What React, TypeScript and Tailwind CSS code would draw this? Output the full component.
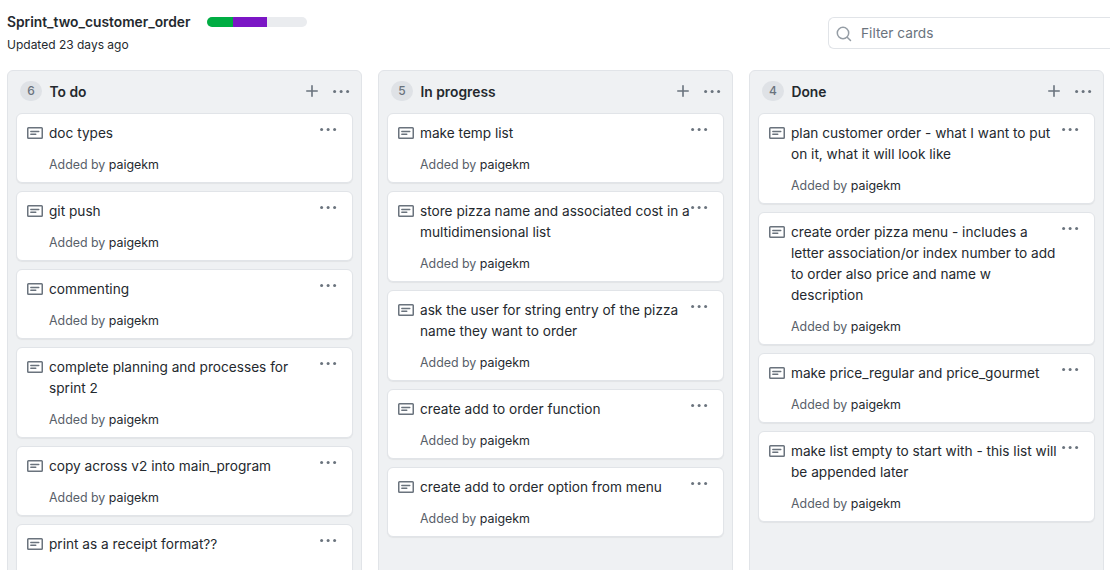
import React from "react";

type Column = { count: number; title: string; cards: string[] };

const columns: Column[] = [
  {
    count: 6,
    title: "To do",
    cards: [
      "doc types",
      "git push",
      "commenting",
      "complete planning and processes for\nsprint 2",
      "copy across v2 into main_program",
      "print as a receipt format??",
    ],
  },
  {
    count: 5,
    title: "In progress",
    cards: [
      "make temp list",
      "store pizza name and associated cost in a\nmultidimensional list",
      "ask the user for string entry of the pizza\nname they want to order",
      "create add to order function",
      "create add to order option from menu",
    ],
  },
  {
    count: 4,
    title: "Done",
    cards: [
      "plan customer order - what I want to put\non it, what it will look like",
      "create order pizza menu - includes a\nletter association/or index number to add\nto order also price and name w\ndescription",
      "make price_regular and price_gourmet",
      "make list empty to start with - this list will\nbe appended later",
    ],
  },
];

function Dots() {
  return (
    <svg width="17" height="3" viewBox="0 0 17 3" fill="#6a737d" className="shrink-0">
      <circle cx="1.6" cy="1.5" r="1.5" />
      <circle cx="8.1" cy="1.5" r="1.5" />
      <circle cx="14.6" cy="1.5" r="1.5" />
    </svg>
  );
}

function NoteIcon() {
  return (
    <svg width="16" height="16" viewBox="0 0 16 16" fill="none" stroke="#6a737d" className="mt-[3px] shrink-0">
      <rect x="0.75" y="2.65" width="14.5" height="10.7" rx="0.8" strokeWidth="1.5" />
      <path d="M3.8 6.5h8M3.8 9.3h5" strokeWidth="1.4" strokeLinecap="round" />
    </svg>
  );
}

function CardItem({ text }: { text: string }) {
  return (
    <article className="flex rounded-md border border-[#e1e4e8] bg-white pt-[8px] pr-[15px] pb-[7px] pl-[10px] shadow-[0_1px_1px_rgba(27,31,35,0.06)]">
      <NoteIcon />
      <div className="ml-[6px] w-0 min-w-0 flex-1 pt-px">
        <p className="text-[13.65px] leading-[21px] whitespace-pre text-[#24292e]">{text}</p>
        <p className="mt-[10px] text-[12.4px] leading-[21px] text-[#586069]">
          Added by <span className="text-[#24292e]">paigekm</span>
        </p>
      </div>
      <div className="mt-[6px] flex h-[3px] shrink-0">
        <Dots />
      </div>
    </article>
  );
}

export default function App() {
  return (
    <div className="flex h-[570px] w-[1110px] flex-col overflow-hidden bg-white font-['Inter',sans-serif] text-[#24292e]">
      <header className="flex h-[70px] shrink-0 justify-between pl-[7px]">
        <div className="pt-[11px]">
          <div className="flex items-center">
            <h1 className="w-[200px] pt-[2px] text-[13.8px] leading-[19px] font-semibold">Sprint_two_customer_order</h1>
            <div className="flex h-[10px] w-[100px] overflow-hidden rounded-full bg-[#eaecef]">
              <span className="w-[26px] bg-[#00ad43]" />
              <span className="w-[34px] bg-[#7b16c5]" />
            </div>
          </div>
          <p className="mt-[4px] text-[12px] leading-[18px]">Updated 23 days ago</p>
        </div>
        <div className="mt-[17px] flex h-[32px] w-[282px] items-center rounded-l-md border border-r-0 border-[#e1e4e8] pl-[7px]">
          <svg width="16" height="16" viewBox="0 0 16 16" fill="none" stroke="#959da5" strokeWidth="1.5" strokeLinecap="round" className="mt-[2px]">
            <circle cx="7" cy="7" r="5.7" />
            <path d="M11.2 11.2l3.3 3.3" />
          </svg>
          <span className="ml-[9px] text-[13.7px] leading-[20px] text-[#6a737d]">Filter cards</span>
        </div>
      </header>
      <main className="flex shrink-0 gap-[16px] pl-[7px]">
        {columns.map((c) => (
          <section key={c.title} className="h-[520px] w-[355px] shrink-0 rounded-md border border-[#e1e4e8] bg-[#eff1f3] px-[8px]">
            <div className="flex h-[42px] items-center pr-[3px] pb-[2px] pl-[4px]">
              <span className="flex h-[20px] w-[22px] items-center justify-center rounded-full bg-[#dfe2e6] text-[12px] font-medium text-[#6a737d]">
                {c.count}
              </span>
              <h2 className="ml-[7.5px] flex-1 pt-[2px] text-[13.8px] leading-[20px] font-semibold">{c.title}</h2>
              <svg width="12" height="12" viewBox="0 0 12 12" stroke="#6a737d" strokeWidth="1.6" strokeLinecap="round" className="mr-[15px]">
                <path d="M6 .8v10.4M.8 6h10.4" />
              </svg>
              <Dots />
            </div>
            <div className="flex flex-col gap-[8px]">
              {c.cards.map((t) => (
                <CardItem key={t} text={t} />
              ))}
            </div>
          </section>
        ))}
      </main>
    </div>
  );
}
